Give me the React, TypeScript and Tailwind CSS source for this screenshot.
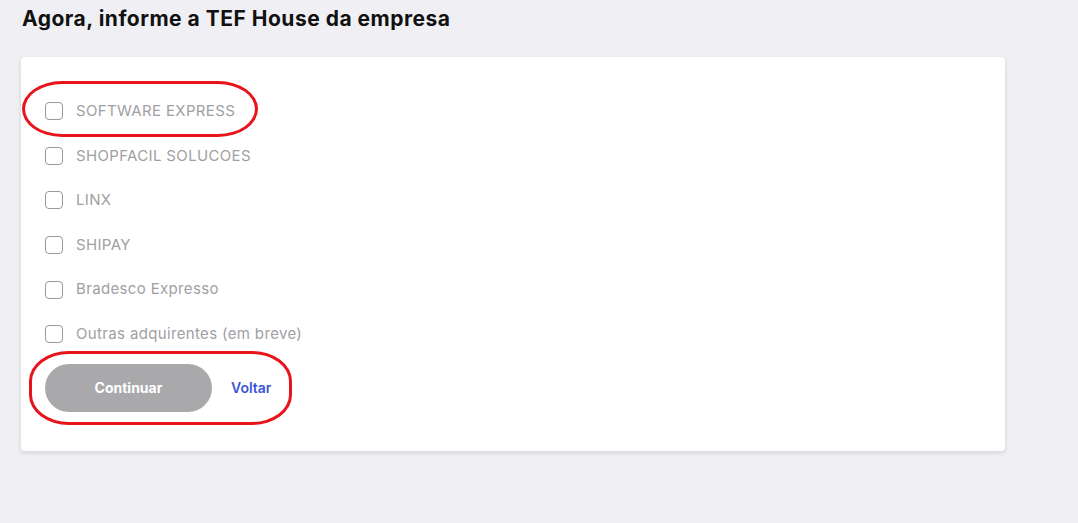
const options = [
  "SOFTWARE EXPRESS",
  "SHOPFACIL SOLUCOES",
  "LINX",
  "SHIPAY",
  "Bradesco Expresso",
  "Outras adquirentes (em breve)",
];

export default function App() {
  return (
    <div
      className="relative min-h-[523px] bg-[#f0f0f4] px-[21px] pt-[5px]"
      style={{ fontFamily: "Inter, 'Noto Sans', sans-serif" }}
    >
      <h1 className="ml-px text-[21px] leading-[28px] font-bold tracking-[0.5px] text-[#111]">
        Agora, informe a TEF House da empresa
      </h1>

      <div className="mt-[24px] w-[984px] rounded-[4px] bg-white px-6 pt-[32px] pb-[39px] shadow-[0_2px_5px_rgba(0,0,0,0.12)]">
        <div className="flex flex-col">
          {options.map((label) => (
            <label key={label} className="flex h-[44.6px] items-center gap-[13px]">
              <span className="h-[18px] w-[18px] rounded-[4px] border border-[#9a9a9a] bg-white" />
              <span className="text-[15px] tracking-[0.35px] text-[#a0a0a3]">{label}</span>
            </label>
          ))}
        </div>

        <div className="mt-[7px] flex items-center gap-[19px]">
          <button className="h-[48px] w-[167px] rounded-full bg-[#a9a9ac] text-[14px] font-bold text-white">
            Continuar
          </button>
          <button className="text-[14px] font-semibold text-[#3d55d6]">Voltar</button>
        </div>
      </div>

      {/* annotation ovals */}
      <div className="pointer-events-none absolute top-[81px] left-[22px] h-[56px] w-[236px] rounded-[40px/28px] border-[3px] border-[#e8141c]" />
      <div className="pointer-events-none absolute top-[351px] left-[29px] h-[74px] w-[263px] rounded-[40px/30px] border-[3px] border-[#e8141c]" />
    </div>
  );
}
